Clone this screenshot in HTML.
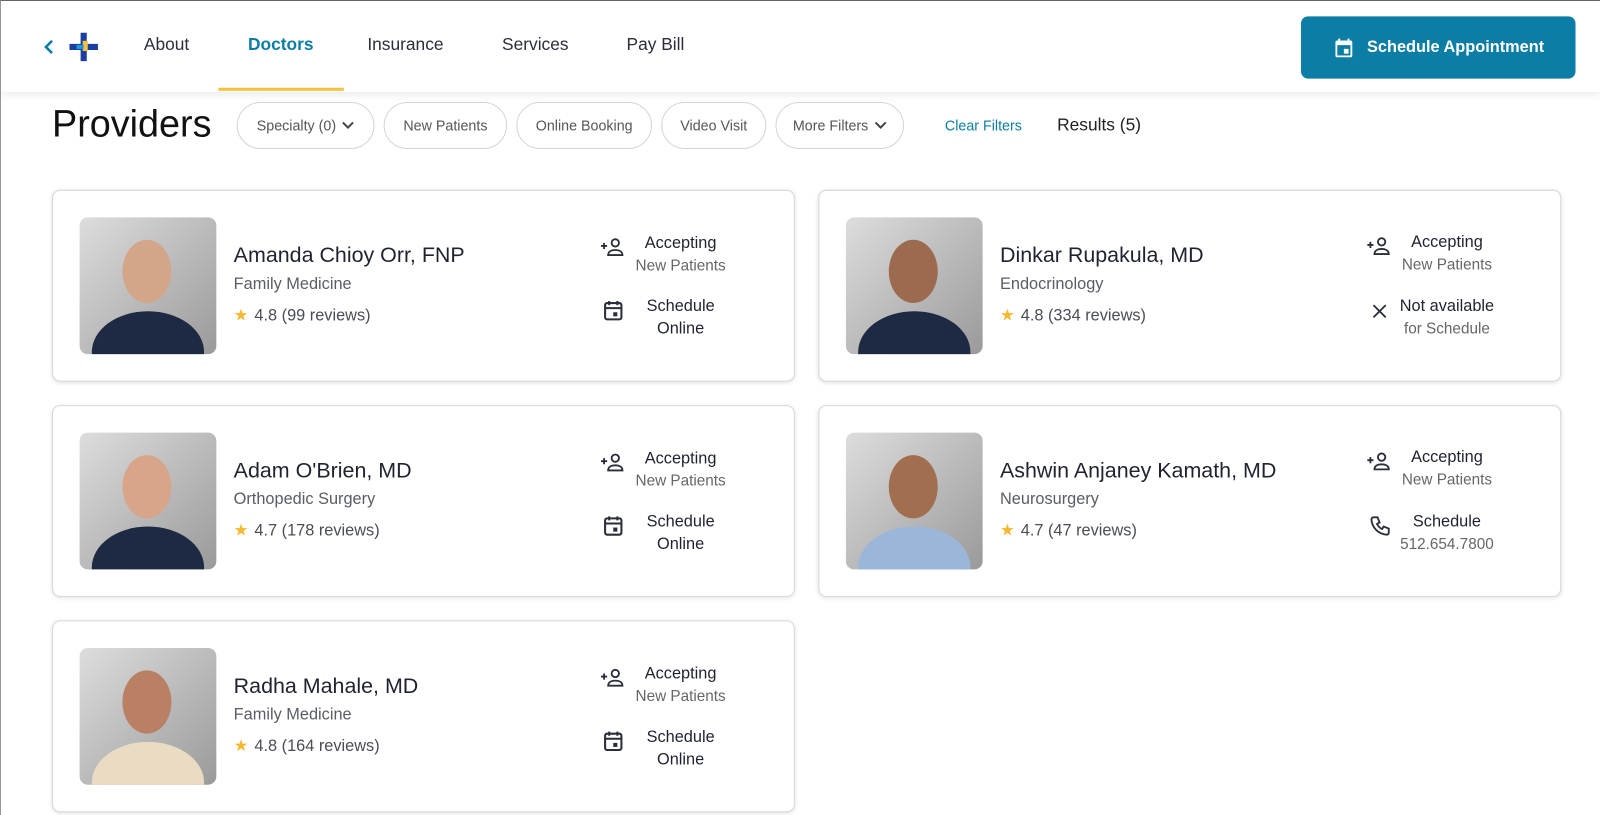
<!DOCTYPE html>
<html><head><style>
*{box-sizing:border-box;margin:0;padding:0}
html,body{width:1600px;height:815px;overflow:hidden;background:#fff}
#w{width:1568px;height:799px;transform:scale(1.0204);transform-origin:0 0;position:relative;font-family:"Liberation Sans",sans-serif;color:#1f2330;border-top:1px solid #666;border-left:1px solid #999}
.hdr{position:absolute;left:0;top:0;width:1568px;height:89px;background:#fff;box-shadow:0 3px 8px rgba(0,0,0,.08)}
.nav{position:absolute;top:33px;font-size:17px;color:#2a2d3a}
.btn{position:absolute;left:1274px;top:15px;width:269px;height:61px;background:#0c7ea6;border-radius:7px;color:#fff;font-weight:bold;font-size:16px;display:flex;align-items:center;justify-content:center;gap:12px}
h1{position:absolute;left:50px;top:100px;font-size:37px;font-weight:normal;color:#111}
.pill{position:absolute;top:99px;height:46px;border:1px solid #d5d5d5;border-radius:23px;font-size:14px;color:#555;display:flex;align-items:center;justify-content:center;gap:6px}
.card{position:absolute;width:728px;height:188px;border:1px solid #d8d8d8;border-radius:8px;box-shadow:0 1px 4px rgba(0,0,0,.12);background:#fff}
.ph{position:absolute;left:26px;top:26px;width:134px;height:134px;border-radius:8px;overflow:hidden;background:linear-gradient(135deg,#ddd,#9a9a9a)}
.ph .hd{position:absolute;left:42px;top:22px;width:48px;height:62px;border-radius:50%;background:#c99a7e}
.ph .bd{position:absolute;left:12px;top:92px;width:110px;height:80px;border-radius:50% 50% 0 0;background:#1e2a44}
.nm{position:absolute;left:177px;top:52px;font-size:21px;color:#1f2330}
.sp{position:absolute;left:177px;top:83px;font-size:16px;color:#5a5d66}
.rt{position:absolute;left:177px;top:112px;font-size:16px;color:#4a4d56}
.rt b{color:#f5b82e;font-weight:normal;margin-right:6px}
.c1,.c2{position:absolute;left:515px;width:200px;text-align:center;font-size:16px;line-height:22px}
.c1{top:41px}.c2{top:103px}
.c1 small,.c2 small{display:block;font-size:15px;color:#666}
.c1 svg,.c2 svg{position:absolute;left:21px;top:4px}
</style></head><body><div id="w">
<div class="hdr">
<svg style="position:absolute;left:41px;top:37px" width="12" height="16" viewBox="0 0 12 16"><path d="M9 2L3 8l6 6" fill="none" stroke="#0c7ea6" stroke-width="2.5"/></svg>
<svg style="position:absolute;left:67px;top:31px" width="28" height="28" viewBox="0 0 28 28"><rect x="11" y="0" width="6" height="28" fill="#1a3fa0"/><rect x="0" y="11" width="28" height="6" fill="#1a3fa0"/><rect x="13" y="8" width="5" height="10" fill="#f6c23e"/><rect x="7" y="12" width="7" height="4" fill="#1b9bd1"/></svg>
<div class="nav" style="left:140px">About</div>
<div class="nav" style="left:242px;color:#0c7ea6;font-weight:bold">Doctors</div>
<div style="position:absolute;left:213px;top:85px;width:123px;height:3px;background:#f6c23e"></div>
<div class="nav" style="left:359px">Insurance</div>
<div class="nav" style="left:491px">Services</div>
<div class="nav" style="left:613px">Pay Bill</div>
<div class="btn"><svg width="22" height="22" viewBox="0 0 24 24"><path d="M19 4h-1V2h-2v2H8V2H6v2H5a2 2 0 0 0-2 2v14a2 2 0 0 0 2 2h14a2 2 0 0 0 2-2V6a2 2 0 0 0-2-2zm0 16H5V9h14zM12 13h5v5h-5z" fill="#fff"/></svg>Schedule Appointment</div>
</div>
<h1>Providers</h1>
<div class="pill" style="left:231px;width:135px">Specialty (0) <svg width="12" height="8"><path d="M1 1l5 5 5-5" fill="none" stroke="#444" stroke-width="2"/></svg></div>
<div class="pill" style="left:375px;width:121px">New Patients</div>
<div class="pill" style="left:505px;width:133px">Online Booking</div>
<div class="pill" style="left:647px;width:103px">Video Visit</div>
<div class="pill" style="left:759px;width:126px">More Filters <svg width="12" height="8"><path d="M1 1l5 5 5-5" fill="none" stroke="#444" stroke-width="2"/></svg></div>
<div style="position:absolute;left:925px;top:114px;font-size:14px;color:#0c7ea6">Clear Filters</div>
<div style="position:absolute;left:1035px;top:112px;font-size:17px;color:#222">Results (5)</div>

<div class="card" style="left:50px;top:185px"><div class="ph"><div class="hd" style="background:#d3a68a"></div><div class="bd"></div></div>
<div class="nm">Amanda Chioy Orr, FNP</div><div class="sp">Family Medicine</div><div class="rt"><b>★</b>4.8 (99 reviews)</div>
<div class="c1"><svg width="26" height="20" viewBox="0 0 26 20"><path d="M1 9h6M4 6v6" stroke="#2a2d3a" stroke-width="1.8"/><circle cx="15" cy="6" r="3.6" fill="none" stroke="#2a2d3a" stroke-width="1.8"/><path d="M8 18c0-4 4-5 7-5s7 1 7 5z" fill="none" stroke="#2a2d3a" stroke-width="1.8"/></svg>Accepting<small>New Patients</small></div>
<div class="c2"><svg width="26" height="22" viewBox="-4 0 26 22"><rect x="1" y="3" width="16" height="16" rx="2" fill="none" stroke="#2a2d3a" stroke-width="2"/><path d="M1 8h16M5 1v4M13 1v4" stroke="#2a2d3a" stroke-width="2"/><rect x="9" y="12" width="4" height="4" fill="#2a2d3a"/></svg>Schedule<br>Online</div></div>

<div class="card" style="left:801px;top:185px"><div class="ph"><div class="hd" style="background:#9c6a4e"></div><div class="bd"></div></div>
<div class="nm">Dinkar Rupakula, MD</div><div class="sp">Endocrinology</div><div class="rt"><b>★</b>4.8 (334 reviews)</div>
<div class="c1" style="top:40px"><svg width="26" height="20" viewBox="0 0 26 20"><path d="M1 9h6M4 6v6" stroke="#2a2d3a" stroke-width="1.8"/><circle cx="15" cy="6" r="3.6" fill="none" stroke="#2a2d3a" stroke-width="1.8"/><path d="M8 18c0-4 4-5 7-5s7 1 7 5z" fill="none" stroke="#2a2d3a" stroke-width="1.8"/></svg>Accepting<small>New Patients</small></div>
<div class="c2"><svg width="26" height="22" viewBox="-4 -2 26 22"><path d="M3 3l12 12M15 3L3 15" stroke="#2a2d3a" stroke-width="1.8"/></svg>Not available<small>for Schedule</small></div></div>

<div class="card" style="left:50px;top:396px"><div class="ph"><div class="hd" style="background:#d9a58a"></div><div class="bd"></div></div>
<div class="nm">Adam O'Brien, MD</div><div class="sp">Orthopedic Surgery</div><div class="rt"><b>★</b>4.7 (178 reviews)</div>
<div class="c1"><svg width="26" height="20" viewBox="0 0 26 20"><path d="M1 9h6M4 6v6" stroke="#2a2d3a" stroke-width="1.8"/><circle cx="15" cy="6" r="3.6" fill="none" stroke="#2a2d3a" stroke-width="1.8"/><path d="M8 18c0-4 4-5 7-5s7 1 7 5z" fill="none" stroke="#2a2d3a" stroke-width="1.8"/></svg>Accepting<small>New Patients</small></div>
<div class="c2"><svg width="26" height="22" viewBox="-4 0 26 22"><rect x="1" y="3" width="16" height="16" rx="2" fill="none" stroke="#2a2d3a" stroke-width="2"/><path d="M1 8h16M5 1v4M13 1v4" stroke="#2a2d3a" stroke-width="2"/><rect x="9" y="12" width="4" height="4" fill="#2a2d3a"/></svg>Schedule<br>Online</div></div>

<div class="card" style="left:801px;top:396px"><div class="ph"><div class="hd" style="background:#a16e50"></div><div class="bd" style="background:#9ab6d8"></div></div>
<div class="nm">Ashwin Anjaney Kamath, MD</div><div class="sp">Neurosurgery</div><div class="rt"><b>★</b>4.7 (47 reviews)</div>
<div class="c1" style="top:40px"><svg width="26" height="20" viewBox="0 0 26 20"><path d="M1 9h6M4 6v6" stroke="#2a2d3a" stroke-width="1.8"/><circle cx="15" cy="6" r="3.6" fill="none" stroke="#2a2d3a" stroke-width="1.8"/><path d="M8 18c0-4 4-5 7-5s7 1 7 5z" fill="none" stroke="#2a2d3a" stroke-width="1.8"/></svg>Accepting<small>New Patients</small></div>
<div class="c2"><svg width="26" height="22" viewBox="-4 0 26 22"><path d="M3 2h4l2 5-2.5 1.5a11 11 0 0 0 5 5L13 11l5 2v4a2 2 0 0 1-2 2A16 16 0 0 1 1 4a2 2 0 0 1 2-2z" fill="none" stroke="#2a2d3a" stroke-width="1.8"/></svg>Schedule<small>512.654.7800</small></div></div>

<div class="card" style="left:50px;top:607px"><div class="ph"><div class="hd" style="background:#b98064"></div><div class="bd" style="background:#e9dcc2"></div></div>
<div class="nm">Radha Mahale, MD</div><div class="sp">Family Medicine</div><div class="rt"><b>★</b>4.8 (164 reviews)</div>
<div class="c1"><svg width="26" height="20" viewBox="0 0 26 20"><path d="M1 9h6M4 6v6" stroke="#2a2d3a" stroke-width="1.8"/><circle cx="15" cy="6" r="3.6" fill="none" stroke="#2a2d3a" stroke-width="1.8"/><path d="M8 18c0-4 4-5 7-5s7 1 7 5z" fill="none" stroke="#2a2d3a" stroke-width="1.8"/></svg>Accepting<small>New Patients</small></div>
<div class="c2"><svg width="26" height="22" viewBox="-4 0 26 22"><rect x="1" y="3" width="16" height="16" rx="2" fill="none" stroke="#2a2d3a" stroke-width="2"/><path d="M1 8h16M5 1v4M13 1v4" stroke="#2a2d3a" stroke-width="2"/><rect x="9" y="12" width="4" height="4" fill="#2a2d3a"/></svg>Schedule<br>Online</div></div>
</div></body></html>
